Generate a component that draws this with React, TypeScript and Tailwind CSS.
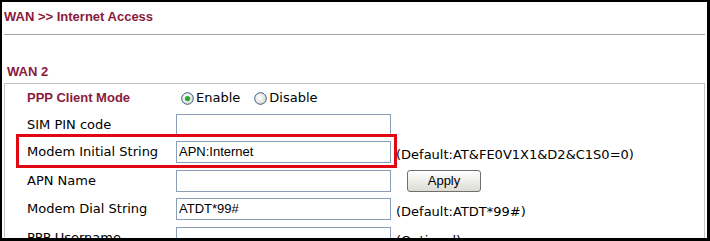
import React from "react";

const maroon = "text-[#8a1a3c]";

function Radio({ checked }: { checked?: boolean }) {
  return (
    <svg width="13" height="13" viewBox="0 0 13 13" className="shrink-0">
      <defs>
        <radialGradient id={checked ? "rg1" : "rg2"} cx="40%" cy="40%" r="60%">
          <stop offset="0%" stopColor="#ffffff" />
          <stop offset="100%" stopColor="#dcdcd6" />
        </radialGradient>
      </defs>
      <circle cx="6.5" cy="6.5" r="5.8" fill={`url(#${checked ? "rg1" : "rg2"})`} stroke="#3b5f8a" strokeWidth="1" />
      {checked && <circle cx="6.5" cy="6.5" r="2.6" fill="#2fa52f" />}
    </svg>
  );
}

function TextBox({ value }: { value?: string }) {
  return (
    <div className="w-[215px] h-[22px] border border-[#8a9fb6] bg-white flex items-center px-[2px] font-['Liberation_Sans',Arial,sans-serif] text-[13px] text-black">
      {value}
    </div>
  );
}

function Row({
  label,
  h,
  children,
  extra,
  labelClass,
}: {
  label: string;
  h: string;
  children: React.ReactNode;
  extra?: React.ReactNode;
  labelClass?: string;
}) {
  return (
    <div className={`grid grid-cols-[171px_215px_1fr] items-center ${h}`}>
      <div className={`pl-[22px] whitespace-nowrap ${labelClass ?? "font-['DejaVu_Sans',Verdana,sans-serif] text-[13px] text-black"}`}>
        {label}
      </div>
      <div>{children}</div>
      <div className="pl-[5px] whitespace-nowrap font-['DejaVu_Sans',Verdana,sans-serif] text-[13px] text-black">
        {extra}
      </div>
    </div>
  );
}

export default function App() {
  return (
    <div className="relative w-[710px] h-[241px] overflow-hidden bg-white border-black border-l-2 border-t-2 border-r-[3px] border-b-[3px]">
      {/* Header */}
      <div className="pl-[2px] pr-[2px]">
        <h1 className={`pt-[7px] h-[22px] leading-[15px] font-['Liberation_Sans',Arial,sans-serif] text-[13px] font-bold ${maroon}`}>
          WAN &gt;&gt; Internet Access
        </h1>
        <div className="mt-[10px] h-px bg-[#a5a5a5]" />
      </div>

      <div className="pl-[2px] pr-[2px]">
        <h2 className={`mt-[29px] pl-[3px] h-[16px] leading-[15px] font-['Liberation_Sans',Arial,sans-serif] text-[13px] font-bold ${maroon}`}>
          WAN 2
        </h2>

        {/* Settings table */}
        <div className="mt-[3px] border border-[#c4c4c4] border-b-0">
          <Row
            label="PPP Client Mode"
            h="h-[28px]"
            labelClass={`font-['Liberation_Sans',Arial,sans-serif] text-[13px] font-bold ${maroon}`}
          >
            <div className="flex items-center pl-[5px] font-['DejaVu_Sans',Verdana,sans-serif] text-[13px] text-black whitespace-nowrap">
              <Radio checked />
              <span className="ml-[2px]">Enable</span>
              <span className="ml-[14px]">
                <Radio />
              </span>
              <span className="ml-[2px]">Disable</span>
            </div>
          </Row>
          <Row label="SIM PIN code" h="h-[25px]">
            <TextBox />
          </Row>
          <Row
            label="Modem Initial String"
            h="h-[29px]"
            extra={<span className="relative top-[3px]">(Default:AT&amp;FE0V1X1&amp;D2&amp;C1S0=0)</span>}
          >
            <TextBox value="APN:Internet" />
          </Row>
          <Row
            label="APN Name"
            h="h-[29px]"
            extra={
              <button className="ml-[11px] w-[74px] h-[22px] rounded-[3px] border border-[#707070] bg-gradient-to-b from-white to-[#dcdcd4] font-['Liberation_Sans',Arial,sans-serif] text-[13px] text-black">
                Apply
              </button>
            }
          >
            <TextBox />
          </Row>
          <Row
            label="Modem Dial String"
            h="h-[28px]"
            extra={<span className="relative top-[3px]">(Default:ATDT*99#)</span>}
          >
            <TextBox value="ATDT*99#" />
          </Row>
          <Row
            label="PPP Username"
            h="h-[29px]"
            extra={<span className="relative top-[3px]">(Optional)</span>}
          >
            <TextBox />
          </Row>
        </div>
      </div>

      {/* Red highlight annotation */}
      <div className="absolute left-[14px] top-[132px] w-[381px] h-[34px] border-[3px] border-[#e30613] pointer-events-none" />
    </div>
  );
}
